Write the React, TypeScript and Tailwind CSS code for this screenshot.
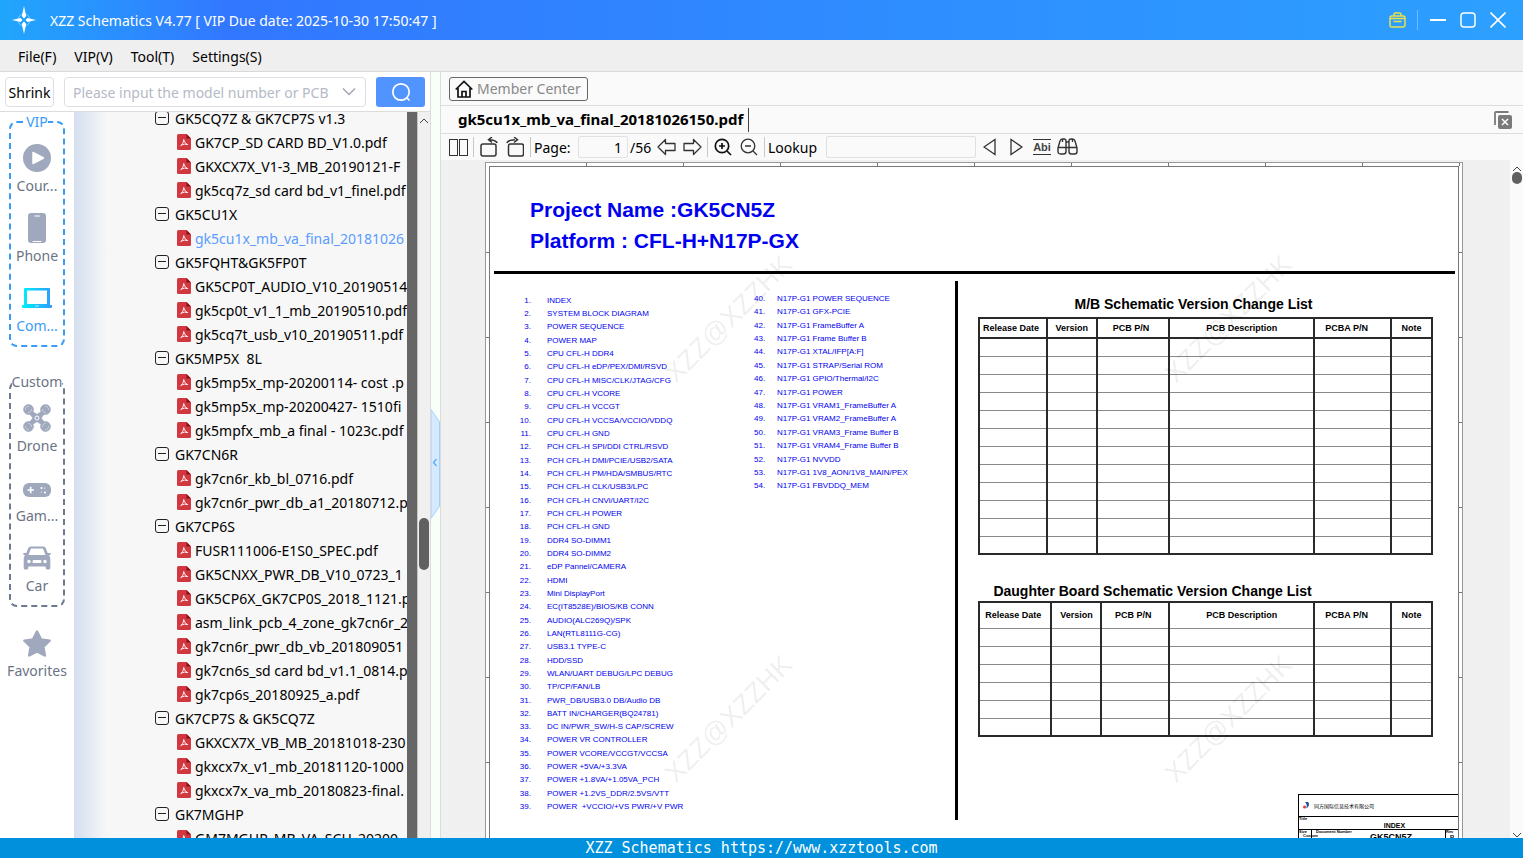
import type { ReactNode } from "react";

type TreeGroup = { name: string; files: string[] };

const tree: TreeGroup[] = [
  {
    name: "GK5CQ7Z & GK7CP7S v1.3",
    files: [
      "GK7CP_SD CARD BD_V1.0.pdf",
      "GKXCX7X_V1-3_MB_20190121-F",
      "gk5cq7z_sd card bd_v1_finel.pdf",
    ],
  },
  { name: "GK5CU1X", files: ["gk5cu1x_mb_va_final_20181026"] },
  {
    name: "GK5FQHT&GK5FP0T",
    files: [
      "GK5CP0T_AUDIO_V10_20190514",
      "gk5cp0t_v1_1_mb_20190510.pdf",
      "gk5cq7t_usb_v10_20190511.pdf",
    ],
  },
  {
    name: "GK5MP5X  8L",
    files: [
      "gk5mp5x_mp-20200114- cost .p",
      "gk5mp5x_mp-20200427- 1510fi",
      "gk5mpfx_mb_a final - 1023c.pdf",
    ],
  },
  {
    name: "GK7CN6R",
    files: ["gk7cn6r_kb_bl_0716.pdf", "gk7cn6r_pwr_db_a1_20180712.p"],
  },
  {
    name: "GK7CP6S",
    files: [
      "FUSR111006-E1S0_SPEC.pdf",
      "GK5CNXX_PWR_DB_V10_0723_1",
      "GK5CP6X_GK7CP0S_2018_1121.p",
      "asm_link_pcb_4_zone_gk7cn6r_2",
      "gk7cn6r_pwr_db_vb_201809051",
      "gk7cn6s_sd card bd_v1.1_0814.p",
      "gk7cp6s_20180925_a.pdf",
    ],
  },
  {
    name: "GK7CP7S & GK5CQ7Z",
    files: [
      "GKXCX7X_VB_MB_20181018-230",
      "gkxcx7x_v1_mb_20181120-1000",
      "gkxcx7x_va_mb_20180823-final.",
    ],
  },
  { name: "GK7MGHP", files: ["GM7MGHP_MB_VA_SCH_20200"] },
];

const indexLeft = [
  "INDEX",
  "SYSTEM BLOCK DIAGRAM",
  "POWER SEQUENCE",
  "POWER MAP",
  "CPU CFL-H DDR4",
  "CPU CFL-H eDP/PEX/DMI/RSVD",
  "CPU CFL-H MISC/CLK/JTAG/CFG",
  "CPU CFL-H VCORE",
  "CPU CFL-H VCCGT",
  "CPU CFL-H VCCSA/VCCIO/VDDQ",
  "CPU CFL-H GND",
  "PCH CFL-H SPI/DDI CTRL/RSVD",
  "PCH CFL-H DMI/PCIE/USB2/SATA",
  "PCH CFL-H PM/HDA/SMBUS/RTC",
  "PCH CFL-H CLK/USB3/LPC",
  "PCH CFL-H CNVi/UART/I2C",
  "PCH CFL-H POWER",
  "PCH CFL-H GND",
  "DDR4 SO-DIMM1",
  "DDR4 SO-DIMM2",
  "eDP Pannel/CAMERA",
  "HDMI",
  "Mini DisplayPort",
  "EC(IT8528E)/BIOS/KB CONN",
  "AUDIO(ALC269Q)/SPK",
  "LAN(RTL8111G-CG)",
  "USB3.1 TYPE-C",
  "HDD/SSD",
  "WLAN/UART DEBUG/LPC DEBUG",
  "TP/CP/FAN/LB",
  "PWR_DB/USB3.0 DB/Audio DB",
  "BATT IN/CHARGER(BQ24781)",
  "DC IN/PWR_SW/H-S CAP/SCREW",
  "POWER VR CONTROLLER",
  "POWER VCORE/VCCGT/VCCSA",
  "POWER +5VA/+3.3VA",
  "POWER +1.8VA/+1.05VA_PCH",
  "POWER +1.2VS_DDR/2.5VS/VTT",
  "POWER  +VCCIO/+VS PWR/+V PWR",
];

const indexRight = [
  "N17P-G1 POWER SEQUENCE",
  "N17P-G1 GFX-PCIE",
  "N17P-G1 FrameBuffer A",
  "N17P-G1 Frame Buffer B",
  "N17P-G1 XTAL/IFP[A:F]",
  "N17P-G1 STRAP/Serial ROM",
  "N17P-G1 GPIO/Thermal/I2C",
  "N17P-G1 POWER",
  "N17P-G1 VRAM1_FrameBuffer A",
  "N17P-G1 VRAM2_FrameBuffer A",
  "N17P-G1 VRAM3_Frame Buffer B",
  "N17P-G1 VRAM4_Frame Buffer B",
  "N17P-G1 NVVDD",
  "N17P-G1 1V8_AON/1V8_MAIN/PEX",
  "N17P-G1 FBVDDQ_MEM",
];

const TitleBar = () => (
  <header className="flex h-10 shrink-0 items-center bg-linear-to-r from-[#20a6fc] via-[#3277ff] via-15% to-[#2ca0ff] text-white">
    <svg className="ml-3 h-7 w-6 shrink-0" viewBox="0 0 24 28" fill="white">
      <circle cx="12" cy="14" r="6" fill="none" stroke="white" strokeOpacity="0.4" />
      <path d="M12 0L14.2 10L12 12.4L9.8 10ZM12 28L14.2 18L12 15.6L9.8 18ZM0 14L8.5 12L10.5 14L8.5 16ZM24 14L15.5 12L13.5 14L15.5 16Z" />
    </svg>
    <h1 className="ml-[14px] text-[14px] whitespace-pre">
      XZZ Schematics V4.77 [ VIP Due date: 2025-10-30 17:50:47 ]
    </h1>
    <div className="ml-auto flex items-center pr-[17px]">
      <button aria-label="Toolbox" className="border-r border-[#74bcff] pr-[11px]">
        <svg width="17" height="20" viewBox="0 0 17 20" fill="none" stroke="#e6e24a" strokeWidth="1.5">
          <rect x="1" y="6" width="15" height="11" rx="2" />
          <path d="M5 6V4.500Q5 3 6.500 3H10.500Q12 3 12 4.500V6M1 8.500H16M4.500 11.500H12.500" />
        </svg>
      </button>
      <button aria-label="Minimize" className="ml-3">
        <svg width="16" height="16" viewBox="0 0 16 16" stroke="white" strokeWidth="2">
          <path d="M0 8H16" />
        </svg>
      </button>
      <button aria-label="Maximize" className="ml-[14px]">
        <svg width="16" height="16" viewBox="0 0 16 16" fill="none" stroke="white" strokeWidth="1.5">
          <rect x="1" y="1" width="14" height="14" rx="3" />
        </svg>
      </button>
      <button aria-label="Close" className="ml-[14px]">
        <svg width="16" height="16" viewBox="0 0 16 16" stroke="white" strokeWidth="1.6">
          <path d="M0.500 0.500L15.500 15.500M15.500 0.500L0.500 15.500" />
        </svg>
      </button>
    </div>
  </header>
);

const MenuBar = () => (
  <nav className="flex h-8 shrink-0 items-center gap-[18px] border-b border-[#d9d9d9] bg-[#efefef] pt-[2px] pl-[18px] text-[14px]">
    <button>File(F)</button>
    <button>VIP(V)</button>
    <button>Tool(T)</button>
    <button>Settings(S)</button>
  </nav>
);

const SearchRow = () => (
  <div className="flex h-10 shrink-0 items-center border-b border-[#dcdcdc] bg-white pt-px pl-[5px]">
    <button className="h-[30px] w-[49px] rounded border border-[#dcdfe6] text-[14px]">Shrink</button>
    <div className="ml-[10px] flex h-[30px] w-[302px] items-center rounded border border-[#dcdfe6] pr-2 pl-2">
      <input
        aria-label="Model number"
        placeholder="Please input the model number or PCB"
        className="w-[265px] bg-transparent text-[14px] outline-none placeholder:text-[#b4bac6]"
      />
      <svg className="ml-1 shrink-0" width="14" height="10" viewBox="0 0 14 10" fill="none" stroke="#a0a6b2" strokeWidth="1.500">
        <path d="M1 1.500L7 7.500L13 1.500" />
      </svg>
    </div>
    <button aria-label="Search" className="ml-[10px] flex h-[30px] w-[49px] items-center justify-center rounded-[3px] bg-[#5294ff]">
      <svg width="20" height="20" viewBox="0 0 20 20" fill="none" stroke="white" strokeWidth="1.700">
        <circle cx="10" cy="10" r="8.200" />
        <path d="M15.500 15.500L18.500 18.500" />
      </svg>
    </button>
  </div>
);

const CourseIcon = () => (
  <svg width="28" height="28" viewBox="0 0 28 28">
    <circle cx="14" cy="14" r="14" fill="#a0a8bd" />
    <path d="M10 8.500L20.500 14L10 19.500Z" fill="white" stroke="white" strokeWidth="1.500" strokeLinejoin="round" />
  </svg>
);

const PhoneIcon = () => (
  <svg width="18" height="30" viewBox="0 0 18 30">
    <rect width="18" height="30" rx="3" fill="#a0a8bd" />
    <path d="M7 3H11.500M5 28.500H13" stroke="white" strokeWidth="1.200" strokeLinecap="round" />
  </svg>
);

const ComputerIcon = () => (
  <svg width="30" height="21" viewBox="0 0 30 21">
    <defs>
      <linearGradient id="laptop" x1="0" x2="1">
        <stop offset="0" stopColor="#00f0fa" />
        <stop offset="1" stopColor="#2f9bff" />
      </linearGradient>
    </defs>
    <path
      fill="url(#laptop)"
      fillRule="evenodd"
      d="M3 0H27Q28 0 28 1V17H30V19Q30 20 29 20H1Q0 20 0 19V17H2V1Q2 0 3 0ZM5 2.500V16H25V2.500Z"
    />
    <path d="M13 18H17" stroke="white" strokeOpacity="0.7" />
  </svg>
);

const DroneIcon = () => (
  <svg width="28" height="28" viewBox="0 0 28 28" fill="#a0a8bd">
    <path d="M6 5L14 10L22 5L24 7L18.500 14L24 21L22 23L14 18L6 23L4 21L9.500 14L4 7Z" />
    <g stroke="#a0a8bd">
      <circle cx="5.500" cy="5.500" r="4.800" />
      <circle cx="22.500" cy="5.500" r="4.800" />
      <circle cx="5.500" cy="22.500" r="4.800" />
      <circle cx="22.500" cy="22.500" r="4.800" />
    </g>
    <g fill="none" stroke="white" strokeOpacity="0.6" strokeWidth="0.700">
      <path d="M2.500 6A3.300 3.300 0 0 1 6 2.300M25.500 6A3.300 3.300 0 0 0 22 2.300M2.500 22A3.300 3.300 0 0 0 6 25.700M25.500 22A3.300 3.300 0 0 1 22 25.700" />
      <path d="M8.500 5A3.300 3.300 0 0 1 5 8.700M19.500 5A3.300 3.300 0 0 0 23 8.700M8.500 23A3.300 3.300 0 0 0 5 19.300M19.500 23A3.300 3.300 0 0 1 23 19.300" />
    </g>
    <circle cx="14" cy="14" r="2" fill="none" stroke="white" strokeWidth="1" />
  </svg>
);

const GameIcon = () => (
  <svg className="mt-1" width="28" height="14" viewBox="0 0 28 14">
    <rect width="28" height="14" rx="6" fill="#a0a8bd" />
    <path d="M4.500 7H11M7.700 3.800V10.200" stroke="white" strokeWidth="1.600" />
    <circle cx="18.500" cy="5" r="1.100" fill="white" />
    <circle cx="22" cy="9.500" r="1.100" fill="white" />
    <circle cx="21.500" cy="5" r="0.600" fill="white" />
    <circle cx="18.500" cy="9" r="0.600" fill="white" />
  </svg>
);

const CarIcon = () => (
  <svg width="28" height="24" viewBox="0 0 28 24">
    <path
      fill="#a0a8bd"
      fillRule="evenodd"
      d="M7.500 0.500H20.500Q22 0.500 22.700 2L24.700 7H27.500Q28.500 8 27 9L26 9.600Q27.300 11 27.300 13V22Q27.300 23.500 26 23.500H24Q22.700 23.500 22.500 20.500H5.500Q5.300 23.500 4 23.500H2Q0.700 23.500 0.700 22V13Q0.700 11 2 9.600L1 9Q-0.500 8 0.500 7H3.300L5.300 2Q6 0.500 7.500 0.500ZM8 2.500L5.500 9H22.500L20 2.500ZM10.500 14Q9.500 14 9.500 15.500Q9.500 17 10.500 17H17.500Q18.500 17 18.500 15.500Q18.500 14 17.500 14Z"
    />
    <circle cx="6" cy="15.500" r="1.700" fill="white" />
    <circle cx="22" cy="15.500" r="1.700" fill="white" />
  </svg>
);

const StarIcon = () => (
  <svg width="28" height="28" viewBox="0 0 28 28">
    <path
      d="M14 2.500L17.900 10.400L26.600 11.700L20.300 17.800L21.800 26.500L14 22.400L6.200 26.500L7.700 17.800L1.400 11.700L10.100 10.400Z"
      fill="#a0a8bd"
      stroke="#a0a8bd"
      strokeWidth="2.500"
      strokeLinejoin="round"
    />
  </svg>
);

const NavItem = ({ icon, label, active }: { icon: ReactNode; label: string; active?: boolean }) => (
  <button
    className={
      active
        ? "flex flex-col items-center text-[14px] leading-[18px] text-[#3a9bf5]"
        : "flex flex-col items-center text-[14px] leading-[18px] text-[#6b7385]"
    }
  >
    <span className="flex h-[38px] items-center">{icon}</span>
    {label}
  </button>
);

const SideNav = () => (
  <nav className="flex w-[74px] shrink-0 flex-col items-center bg-white">
    <fieldset className="flex w-14 flex-col gap-[14px] rounded-lg border-2 border-dashed border-[#3a9bf5] pt-[7px] pb-[10px]">
      <legend className="mx-auto h-5 text-[14px] leading-5 text-[#3a9bf5]">VIP</legend>
      <NavItem icon={<CourseIcon />} label="Cour..." />
      <NavItem icon={<PhoneIcon />} label="Phone" />
      <NavItem icon={<ComputerIcon />} label="Com..." active />
    </fieldset>
    <fieldset className="mt-[25px] flex w-14 flex-col gap-[14px] rounded-lg border-2 border-dashed border-[#6b7a90] pt-[7px] pb-[10px]">
      <legend className="mx-auto h-5 text-[14px] leading-5 text-[#6b7385]">Custom</legend>
      <NavItem icon={<DroneIcon />} label="Drone" />
      <NavItem icon={<GameIcon />} label="Gam..." />
      <NavItem icon={<CarIcon />} label="Car" />
    </fieldset>
    <div className="mt-[17px]">
      <NavItem icon={<StarIcon />} label="Favorites" />
    </div>
  </nav>
);

const PdfIcon = () => (
  <svg className="shrink-0" width="14" height="16" viewBox="0 0 14 16">
    <path d="M1.500 0H9.500L14 4.500V14.500Q14 16 12.500 16H1.500Q0 16 0 14.500V1.500Q0 0 1.500 0Z" fill="#d2373f" />
    <path d="M9.500 0L14 4.500H9.500Z" fill="#8c1016" />
    <path d="M6.700 5.500Q7.300 9 10.800 10.800M6.700 5.500Q6.800 9.500 3.500 12.200M4.500 11Q7.500 9.500 10.800 10.500" fill="none" stroke="white" strokeWidth="0.900" />
  </svg>
);

const MinusBox = () => (
  <svg className="shrink-0" width="14" height="14" viewBox="0 0 14 14" fill="none" stroke="#222">
    <rect x="0.500" y="0.500" width="13" height="13" rx="2.500" />
    <path d="M3 6.500H11" />
  </svg>
);

const FileTree = () => (
  <div className="min-w-0 flex-1 overflow-hidden bg-[#f7f7f7] bg-linear-to-r from-[#d5dff0] to-[#f7f7f7] to-10%">
    <ul className="-mt-[6px] text-[14px] whitespace-pre">
      {tree.map((group) => (
        <li key={group.name}>
          <div className="flex h-6 items-center gap-[6px] pl-[81px]">
            <MinusBox />
            {group.name}
          </div>
          <ul>
            {group.files.map((file) => (
              <li key={file} className="flex h-6 items-center gap-1 pl-[103px]">
                <PdfIcon />
                <a href="#" className={file.startsWith("gk5cu1x") ? "text-[#5a9cff]" : "text-black"}>
                  {file}
                </a>
              </li>
            ))}
          </ul>
        </li>
      ))}
    </ul>
  </div>
);

const Chevron = ({ down }: { down?: boolean }) => (
  <svg className="shrink-0" width="10" height="6" viewBox="0 0 10 6" fill="none" stroke="#444">
    <path d={down ? "M1 1L5 5L9 1" : "M1 5L5 1L9 5"} />
  </svg>
);

const LeftPanel = () => (
  <aside className="flex w-[431px] shrink-0 flex-col border-r border-[#dcdcdc]">
    <SearchRow />
    <div className="flex min-h-0 flex-1">
      <SideNav />
      <FileTree />
      <div className="w-[11px] shrink-0 border-r border-[#c4c4c4] bg-[#666]" />
      <div className="flex w-3 shrink-0 flex-col items-center bg-[#f0f0f0] pt-[6px]">
        <Chevron />
        <div className="mt-[394px] h-[52px] w-[10px] rounded-full bg-[#606060]" />
      </div>
    </div>
  </aside>
);

const Splitter = () => (
  <div className="flex w-[10px] shrink-0 items-center border-r border-[#dcdcdc] bg-[#f8fef8] pt-[18px]">
    <button aria-label="Collapse panel">
      <svg width="9" height="110" viewBox="0 0 9 110" fill="none">
        <path d="M0 0.500L8.500 13V97L0 109.500Z" fill="#d6eaff" stroke="#a3d0fb" />
        <path d="M5.500 50L2.500 53.500L5.500 57" stroke="#58aef5" strokeWidth="1.300" />
      </svg>
    </button>
  </div>
);

const Sep = () => <div className="h-5 w-px shrink-0 bg-[#c8c8c8]" />;

const Toolbar = () => (
  <div className="flex h-[26px] shrink-0 items-center bg-[#fafafa] pl-2 text-[14px]">
    <button aria-label="Two pages">
      <svg width="19" height="18" viewBox="0 0 19 18" fill="none" stroke="#333">
        <rect x="0.500" y="1.500" width="8" height="16" />
        <rect x="10.500" y="1.500" width="8" height="16" />
      </svg>
    </button>
    <div className="ml-[5px]"><Sep /></div>
    <button aria-label="Rotate left" className="ml-[6px]">
      <svg width="18" height="20" viewBox="0 0 18 20" fill="none" stroke="#333" strokeWidth="1.500">
        <rect x="1" y="7" width="15" height="12" rx="2" />
        <path d="M17.300 6Q15.500 2.700 9 2.700M12 0L8.500 2.700L12 5.500" />
      </svg>
    </button>
    <button aria-label="Rotate right" className="ml-2">
      <svg width="18" height="20" viewBox="0 0 18 20" fill="none" stroke="#333" strokeWidth="1.500">
        <rect x="2.500" y="7" width="15" height="12" rx="2" />
        <path d="M0.700 6Q2.500 2.700 9 2.700M8 0L11.500 2.700L8 5.500" />
      </svg>
    </button>
    <div className="ml-[6px]"><Sep /></div>
    <label htmlFor="page" className="ml-[3px] w-[44px]">Page:</label>
    <input
      id="page"
      defaultValue="1"
      className="h-[22px] w-[50px] rounded-[2px] border border-[#e2e2e2] bg-[#fafafa] pr-[5px] text-right outline-none"
    />
    <span className="ml-[2px] w-[27px]">/56</span>
    <button aria-label="Previous page">
      <svg width="19" height="18" viewBox="0 0 19 18" fill="none" stroke="#333" strokeWidth="1.300">
        <path d="M1 9L8.500 1.500V5.500H18V12.500H8.500V16.500Z" strokeLinejoin="round" />
      </svg>
    </button>
    <button aria-label="Next page" className="ml-[7px]">
      <svg width="19" height="18" viewBox="0 0 19 18" fill="none" stroke="#333" strokeWidth="1.300">
        <path d="M18 9L10.500 1.500V5.500H1V12.500H10.500V16.500Z" strokeLinejoin="round" />
      </svg>
    </button>
    <div className="ml-[5px]"><Sep /></div>
    <button aria-label="Zoom in" className="ml-[6px]">
      <svg width="18" height="18" viewBox="0 0 18 18" fill="none" stroke="#111" strokeWidth="1.700">
        <circle cx="8" cy="8" r="6.700" />
        <path d="M13 13L17 17M5 8H11M8 5V11" />
      </svg>
    </button>
    <button aria-label="Zoom out" className="ml-2">
      <svg width="18" height="18" viewBox="0 0 18 18" fill="none" stroke="#333" strokeWidth="1.300">
        <circle cx="8" cy="8" r="6.800" />
        <path d="M13 13L17 17M5 8H11" />
      </svg>
    </button>
    <div className="ml-[6px]"><Sep /></div>
    <label htmlFor="lookup" className="ml-[3px] w-[58px]">Lookup</label>
    <input id="lookup" className="h-[22px] w-[150px] rounded-[2px] border border-[#e0e0e0] bg-[#fafafa] outline-none" />
    <button aria-label="Find previous" className="ml-[7px]">
      <svg width="13" height="18" viewBox="0 0 13 18" fill="none" stroke="#333" strokeWidth="1.300">
        <path d="M1 9L12 1.500V16.500Z" />
      </svg>
    </button>
    <button aria-label="Find next" className="ml-[14px]">
      <svg width="13" height="18" viewBox="0 0 13 18" fill="none" stroke="#333" strokeWidth="1.300">
        <path d="M12 9L1 1.500V16.500Z" />
      </svg>
    </button>
    <button className="ml-[10px] h-4 w-[18px] border-y border-[#333] font-['Liberation_Sans'] text-[11px] leading-[14px] font-bold text-[#444]">
      Abi
    </button>
    <button aria-label="Search document" className="ml-[6px]">
      <svg width="21" height="18" viewBox="0 0 21 18" fill="none" stroke="#333" strokeWidth="1.400">
        <path d="M1 10L3 3Q3.500 1 5.500 1H7Q9 1 9 3V13.500Q9 16 6.500 16H3.500Q1 16 1 13.500Z" />
        <path d="M20 10L18 3Q17.500 1 15.500 1H14Q12 1 12 3V13.500Q12 16 14.500 16H17.500Q20 16 20 13.500Z" />
        <path d="M1 9.500H9M12 9.500H20M9 4H12M9 9.500H12M5.500 1V4M15.500 1V4" />
      </svg>
    </button>
  </div>
);

const IndexList = ({ items, start }: { items: string[]; start: number }) => (
  <>
    {items.map((item, i) => (
      <li key={item} className="flex min-h-0 flex-1 items-center">
        <span className={start === 1 ? "w-[42px] pr-px text-right" : "w-[23px]"}>{start + i}.</span>
        <span className={start === 1 ? "ml-[15px]" : ""}>{item}</span>
      </li>
    ))}
  </>
);

const heads = ["Release Date", "Version", "PCB P/N", "PCB Description", "PCBA P/N", "Note"];

const MainBoardCols = () => (
  <colgroup>
    <col className="w-[15%]" />
    <col className="w-[11%]" />
    <col className="w-[16%]" />
    <col className="w-[32%]" />
    <col className="w-[17%]" />
    <col className="w-[9%]" />
  </colgroup>
);

const DaughterBoardCols = () => (
  <colgroup>
    <col className="w-[16%]" />
    <col className="w-[11%]" />
    <col className="w-[15%]" />
    <col className="w-[32%]" />
    <col className="w-[17%]" />
    <col className="w-[9%]" />
  </colgroup>
);

const ChangeTable = ({ rows, cols, headClass }: { rows: number; cols: ReactNode; headClass: string }) => (
  <table className="w-full table-fixed border-collapse border-2 border-[#2a2a2a]">
    {cols}
    <thead>
      <tr className={headClass}>
        {heads.map((head) => (
          <th
            key={head}
            className={
              head === "PCBA P/N" || head === "PCB P/N" || head === "Release Date"
                ? "border-x-2 border-[#2a2a2a] p-0 pr-1 text-[9px] leading-3 whitespace-nowrap"
                : "border-x-2 border-[#2a2a2a] p-0 text-[9px] leading-3 whitespace-nowrap"
            }
          >
            <span className={head === "PCBA P/N" ? "pr-2" : ""}>{head}</span>
          </th>
        ))}
      </tr>
    </thead>
    <tbody>
      {Array.from({ length: rows }, (_, r) => (
        <tr key={r} className="h-[18px] border-t border-[#8a8a8a]">
          {heads.map((head) => (
            <td key={head} className="border-x-2 border-x-[#2a2a2a] p-0" />
          ))}
        </tr>
      ))}
    </tbody>
  </table>
);

const Watermark = ({ className }: { className: string }) => (
  <span className={`pointer-events-none absolute -rotate-45 text-[27px] leading-8 text-black/8 ${className}`}>
    XZZ@XZZHK
  </span>
);

const TitleBlock = () => (
  <div className="mt-[57px] ml-auto w-40 border border-r-0 border-black text-[4px] leading-none">
    <div className="flex h-[21px] items-center gap-1 pl-1">
      <svg width="7" height="7" viewBox="0 0 7 7">
        <path d="M2 0H5Q7 2 5 5L3 6.500Q5 3 2 0Z" fill="#1c4f9c" />
        <circle cx="1.500" cy="5" r="1.500" fill="#e23a3a" />
      </svg>
      <span className="font-['Noto_Sans_CJK_SC'] text-[5px]">同方国际信息技术有限公司</span>
    </div>
    <div className="flex h-[13px] border-t border-black">
      <span className="w-8 font-bold">Title</span>
      <span className="w-32 pt-[5px] text-center text-[7px] font-bold">INDEX</span>
    </div>
    <div className="flex h-5 border-t border-black font-bold">
      <span className="w-[13px] border-r border-black">Size<br /><span className="pl-1">Custom</span></span>
      <span className="w-10 pl-1">Document Number</span>
      <span className="flex-1 pt-[3px] pl-[18px] text-[9px]">GK5CN5Z</span>
      <span className="w-[13px] border-l border-black">Rev<br /><span className="pl-1 text-[6px]">B</span></span>
    </div>
  </div>
);

// Rulers printed along the edges of the sheet
const SideRuler = () => (
  <div className="w-[3px] shrink-0 pt-[2px]">
    {Array.from({ length: 8 }, (_, i) => (
      <div key={i} className="h-[85px] border-b border-[#777]" />
    ))}
  </div>
);

const Sheet = () => (
  <div className="relative mr-[47px] ml-[44px] min-w-0 flex-1 border-x border-t border-[#999] bg-white font-['Liberation_Sans',sans-serif] text-black">
    <div className="flex h-[3px] pr-[2px] pl-[4px]">
      {Array.from({ length: 10 }, (_, i) => (
        <div key={i} className="flex-1 border-r border-[#777]" />
      ))}
    </div>
    <div className="flex">
      <SideRuler />
      <div className="min-w-0 flex-1 border-x border-t border-[#777]">
        <div className="pt-[27px] pl-10 text-[21px] leading-[31px] font-bold text-[#0000f0]">
          <h2>Project Name :GK5CN5Z</h2>
          <h2>Platform : CFL-H+N17P-GX</h2>
        </div>
        <div className="mt-[15px] mr-[3px] ml-1 h-[3px] bg-black" />
        <div className="flex">
          <div className="flex w-[465px] shrink-0 text-[8px] leading-3 whitespace-pre text-[#0000f0]">
            <ol className="mt-5 flex h-[520px] w-[264px] flex-col">
              <IndexList items={indexLeft} start={1} />
            </ol>
            <ol className="mt-[18px] flex h-[201px] flex-1 flex-col">
              <IndexList items={indexRight} start={40} />
            </ol>
          </div>
          <div className="mt-[7px] h-[539px] w-[3px] shrink-0 bg-black" />
          <div className="min-w-0 flex-1">
            <div className="mr-[25px] ml-5">
              <h3 className="mt-5 mb-[3px] pr-6 text-center text-[14px] leading-5 font-bold">
                M/B Schematic Version Change List
              </h3>
              <ChangeTable rows={12} cols={<MainBoardCols />} headClass="h-5 border-b-2 border-[#2a2a2a]" />
              <h3 className="mt-[27px] pr-[106px] text-center text-[14px] leading-[19px] font-bold">
                Daughter Board Schematic Version Change List
              </h3>
              <ChangeTable rows={6} cols={<DaughterBoardCols />} headClass="h-[26px]" />
            </div>
            <TitleBlock />
          </div>
        </div>
      </div>
      <SideRuler />
    </div>
    <Watermark className="top-[140px] left-[159px]" />
    <Watermark className="top-[140px] left-[659px]" />
    <Watermark className="top-[540px] left-[159px]" />
    <Watermark className="top-[540px] left-[659px]" />
  </div>
);

const Viewer = () => (
  <main className="flex min-w-0 flex-1 flex-col bg-[#fafafa]">
    <div className="flex h-[34px] shrink-0 items-center border-b border-[#dcdcdc] pl-2">
      <button className="flex h-6 w-[139px] items-center gap-1 rounded-[3px] border border-[#666] pl-[5px] text-[14px] whitespace-nowrap text-[#888]">
        <svg width="18" height="18" viewBox="0 0 18 18" fill="none" stroke="#111" strokeWidth="1.700">
          <path d="M0.700 9.500L9 1.500L17.300 9.500M3 8V17H15V8M7 17V11.500H11V17" />
        </svg>
        Member Center
      </button>
    </div>
    <div className="flex h-7 shrink-0 items-center border-b border-[#dcdcdc] pr-[11px]">
      <button className="h-6 border-r border-[#444] pr-[5px] pl-[17px] text-[15px] font-bold">
        gk5cu1x_mb_va_final_20181026150.pdf
      </button>
      <button aria-label="Close all tabs" className="ml-auto">
        <svg width="18" height="18" viewBox="0 0 18 18" fill="none">
          <path d="M1 14V2Q1 1 2 1H14.500" stroke="#7a7a7a" strokeWidth="1.800" />
          <rect x="4" y="4" width="14" height="14" rx="2" fill="#7a7a7a" />
          <path d="M8 8L14 14M14 8L8 14" stroke="white" strokeWidth="1.500" />
        </svg>
      </button>
    </div>
    <Toolbar />
    <div className="flex min-h-0 flex-1 overflow-hidden bg-[#f0f0f0]">
      <div className="flex min-w-0 flex-1 pt-[2px]">
        <Sheet />
      </div>
      <div className="flex w-[13px] shrink-0 flex-col items-center bg-[#fafafa] pt-[6px]">
        <Chevron />
        <div className="h-3 w-[10px] rounded-full bg-[#606060]" />
        <div className="mt-auto"><Chevron down /></div>
      </div>
    </div>
  </main>
);

const App = () => {
  return (
    <div className="flex h-screen flex-col overflow-hidden bg-white font-['Noto_Sans','Noto_Sans_CJK_SC',sans-serif] text-black">
      <TitleBar />
      <MenuBar />
      <div className="flex min-h-0 flex-1">
        <LeftPanel />
        <Splitter />
        <Viewer />
      </div>
      <footer className="h-5 shrink-0 bg-[#0090dc] text-center font-['DejaVu_Sans_Mono',monospace] text-[15px] leading-5 text-white">
        XZZ Schematics https://www.xzztools.com
      </footer>
    </div>
  );
};

export default App;
